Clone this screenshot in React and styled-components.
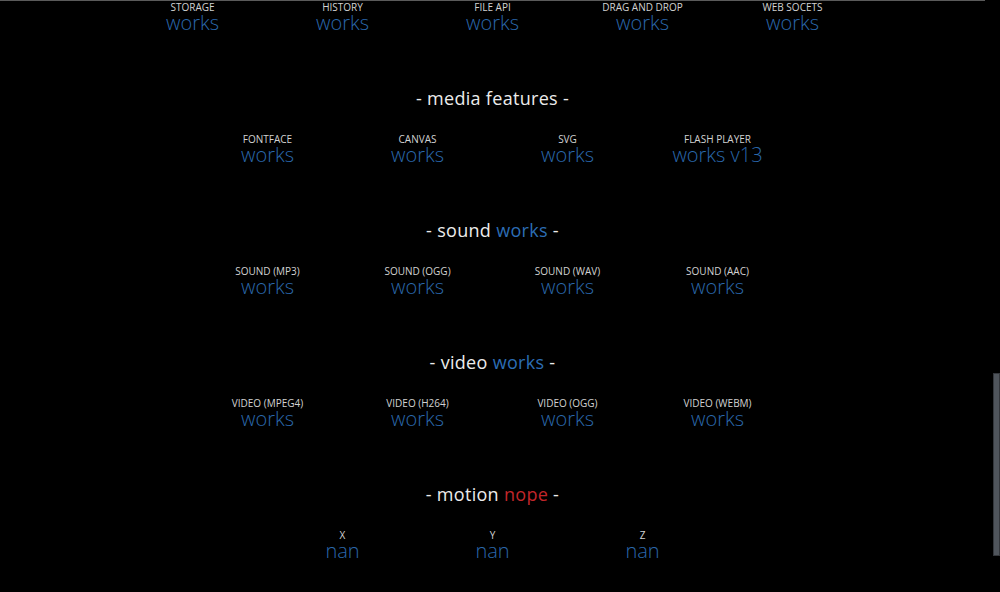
import React from 'react'
import styled, { createGlobalStyle } from 'styled-components'

const GlobalStyle = createGlobalStyle`
html, body {
  margin: 0;
  padding: 0;
  background: #000;
  overflow: hidden;
}
body {
  font-family: "Open Sans", "Noto Sans", sans-serif;
}
`

const sections = [
  {
    items: [
      ['storage', 'works'],
      ['history', 'works'],
      ['file api', 'works'],
      ['drag and drop', 'works'],
      ['web socets', 'works'],
    ],
  },
  {
    title: 'media features',
    items: [
      ['fontface', 'works'],
      ['canvas', 'works'],
      ['svg', 'works'],
      ['flash player', 'works v13'],
    ],
  },
  {
    title: 'sound',
    status: 'works',
    items: [
      ['sound (mp3)', 'works'],
      ['sound (ogg)', 'works'],
      ['sound (wav)', 'works'],
      ['sound (aac)', 'works'],
    ],
  },
  {
    title: 'video',
    status: 'works',
    items: [
      ['video (mpeg4)', 'works'],
      ['video (h264)', 'works'],
      ['video (ogg)', 'works'],
      ['video (webm)', 'works'],
    ],
  },
  {
    title: 'motion',
    status: 'nope',
    items: [
      ['x', 'nan'],
      ['y', 'nan'],
      ['z', 'nan'],
    ],
  },
]

function App() {
  return (
    <Page>
      <GlobalStyle />
      {sections.map((s, i) => (
        <Section key={i}>
          {s.title && (
            <Heading>
              - {s.title}
              {s.status && <Status bad={s.status === 'nope'}> {s.status}</Status>} -
            </Heading>
          )}
          <Row>
            {s.items.map(([label, value]) => (
              <Feature key={label}>
                <Label>{label}</Label>
                <Value>{value}</Value>
              </Feature>
            ))}
          </Row>
        </Section>
      ))}
      <ScrollThumb />
    </Page>
  )
}

export default App

const Page = styled.div`
width: 985px;
height: 591px;
border-top: 1px solid #5a5a5a;
background: #000;
`

const Section = styled.div`
display: flex;
flex-direction: column;
align-items: center;
& + & {
  margin-top: 53px;
}
`

const Heading = styled.div`
font-size: 18px;
line-height: 24px;
color: #ececec;
letter-spacing: 0.3px;
margin-bottom: 23px;
white-space: pre;
`

const Status = styled.span`
color: ${props => (props.bad ? '#c2262a' : '#2c6db4')};
`

const Row = styled.div`
display: flex;
justify-content: center;
`

const Feature = styled.div`
width: 150px;
display: flex;
flex-direction: column;
align-items: center;
`

const Label = styled.div`
font-size: 10px;
line-height: 12px;
color: #d2d2d2;
text-transform: uppercase;
`

const Value = styled.div`
font-size: 20px;
line-height: 20px;
font-weight: 300;
color: #2a67ab;
`

const ScrollThumb = styled.div`
position: fixed;
right: 0;
top: 373px;
width: 7px;
height: 183px;
background: #50555c;
border: 1px solid #34373c;
box-sizing: border-box;
`
